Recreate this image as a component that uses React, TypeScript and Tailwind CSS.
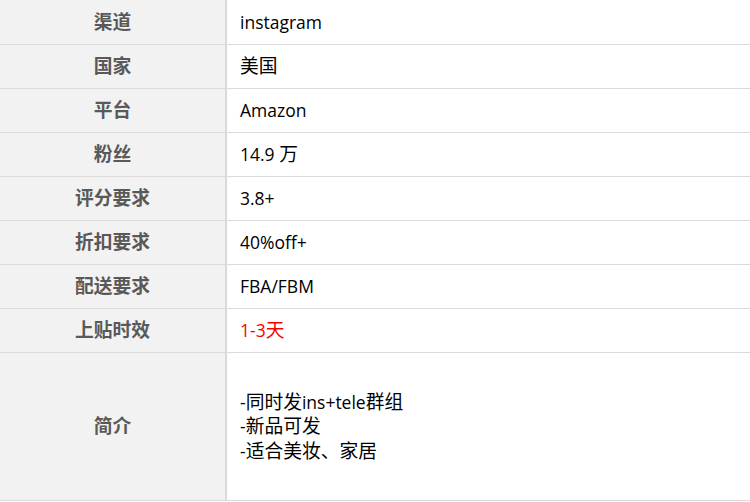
const cjk = /([\u3000-\u303f\u4e00-\u9fff\uff00-\uffef]+)/;

// wider CJK glyphs next to narrower latin ones, like the original sheet
const Mixed = ({ text }: { text: string }) => (
  <>
    {text.split(cjk).map((part, i) =>
      cjk.test(part) ? (
        <span key={i} className="text-[18.75px]">
          {part}
        </span>
      ) : (
        <span key={i}>{part}</span>
      )
    )}
  </>
);

const rows: { label: string; lines: string[]; red?: boolean; tall?: boolean }[] = [
  { label: "渠道", lines: ["instagram"] },
  { label: "国家", lines: ["美国"] },
  { label: "平台", lines: ["Amazon"] },
  { label: "粉丝", lines: ["14.9 万"] },
  { label: "评分要求", lines: ["3.8+"] },
  { label: "折扣要求", lines: ["40%off+"] },
  { label: "配送要求", lines: ["FBA/FBM"] },
  { label: "上贴时效", lines: ["1-3天"], red: true },
  {
    label: "简介",
    lines: ["-同时发ins+tele群组", "-新品可发", "-适合美妆、家居"],
    tall: true,
  },
];

const App = () => {
  return (
    <div
      className="w-[750px] bg-white"
      style={{ fontFamily: '"Open Sans", "Noto Sans CJK SC", sans-serif' }}
    >
      {rows.map((row, idx) => (
        <div
          key={row.label}
          className={`flex border-b border-[#dadada] ${
            row.tall ? "h-[148px]" : idx === 0 ? "h-[45px]" : "h-[44px]"
          }`}
        >
          <div className="w-[227px] shrink-0 bg-[#f2f2f2] border-r-2 border-[#dadada] flex items-center justify-center text-[18.75px] font-bold text-[#595959]">
            {row.label}
          </div>
          <div
            className={`flex-1 flex flex-col justify-center pl-[13px] text-[17.5px] leading-[24.5px] ${
              row.red ? "text-[#ff0000]" : "text-black"
            }`}
          >
            {row.lines.map((line) => (
              <div key={line}>
                <Mixed text={line} />
              </div>
            ))}
          </div>
        </div>
      ))}
    </div>
  );
};

export default App;
